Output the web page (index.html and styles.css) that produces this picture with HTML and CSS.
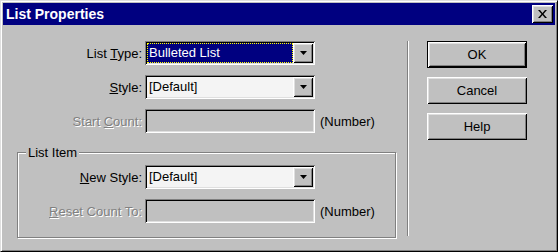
FILE: index.html
```html
<!DOCTYPE html>
<html lang="en">
<head>
    <meta charset="UTF-8">
    <title>List Properties</title>
    <link rel="stylesheet" href="styles.css">
</head>
<body>

<div class="window">
    <div class="titlebar">
        <span class="title">List Properties</span>
        <button class="close" type="button">
            <svg width="9" height="8" viewBox="0 0 9 8"><path d="M0 0h2l2.5 3 2.5-3h2l-3.5 4 3.5 4h-2l-2.5-3-2.5 3h-2l3.5-4z" fill="#000"/></svg>
        </button>
    </div>

    <div class="content">
        <div class="fields">
            <div class="row">
                <label>List <u>T</u>ype:</label>
                <div class="combo">
                    <div class="value selected">Bulleted List</div>
                    <div class="drop"><svg width="7" height="4" viewBox="0 0 7 4"><path d="M0 0h7l-3.5 4z" fill="#000"/></svg></div>
                </div>
            </div>
            <div class="row">
                <label><u>S</u>tyle:</label>
                <div class="combo">
                    <div class="value">[Default]</div>
                    <div class="drop"><svg width="7" height="4" viewBox="0 0 7 4"><path d="M0 0h7l-3.5 4z" fill="#000"/></svg></div>
                </div>
            </div>
            <div class="row">
                <label class="disabled">Start <u>C</u>ount:</label>
                <div class="field"></div>
                <span class="hint">(Number)</span>
            </div>

            <div class="group">
                <span class="legend">List Item</span>
                <div class="row">
                    <label><u>N</u>ew Style:</label>
                    <div class="combo">
                        <div class="value">[Default]</div>
                        <div class="drop"><svg width="7" height="4" viewBox="0 0 7 4"><path d="M0 0h7l-3.5 4z" fill="#000"/></svg></div>
                    </div>
                </div>
                <div class="row">
                    <label class="disabled"><u>R</u>eset Count To:</label>
                    <div class="field"></div>
                    <span class="hint">(Number)</span>
                </div>
            </div>
        </div>

        <div class="divider"></div>

        <div class="buttons">
            <button class="btn default" type="button">OK</button>
            <button class="btn" type="button">Cancel</button>
            <button class="btn" type="button">Help</button>
        </div>
    </div>
</div>

</body>
</html>
```

FILE: styles.css
```css
body {
    margin: 0;
    background-color: #c0c0c0;
    font-family: "Liberation Sans", Arial, sans-serif;
    font-size: 13px;
    color: #000;
}

.window {
    width: 558px;
    height: 252px;
    box-sizing: border-box;
    padding: 2px;
    border: 1px solid;
    border-color: #dfdfdf #000 #000 #dfdfdf;
    box-shadow: inset 1px 1px #fff, inset -1px -1px #808080;
    background-color: #c0c0c0;
    display: flex;
    flex-direction: column;
}

.titlebar {
    height: 22px;
    flex-shrink: 0;
    background-color: #000080;
    color: #fff;
    display: flex;
    align-items: center;
    justify-content: space-between;
    padding: 0 2px 0 3px;
}

.title {
    font-weight: bold;
    font-size: 14px;
}

.close,
.btn,
.drop {
    background-color: #c0c0c0;
    border: none;
    padding: 0;
    box-shadow: inset 1px 1px #fff, inset -1px -1px #000, inset 2px 2px #dfdfdf, inset -2px -2px #808080;
    display: flex;
    align-items: center;
    justify-content: center;
}

.close {
    width: 21px;
    height: 18px;
}

.content {
    display: flex;
    flex: 1;
}

.fields {
    width: 404px;
    padding-top: 16px;
    display: flex;
    flex-direction: column;
    gap: 10px;
}

.row {
    display: flex;
    align-items: center;
    height: 24px;
}

.row label {
    width: 139px;
    margin-right: 3px;
    text-align: right;
    white-space: nowrap;
}

.disabled {
    color: #808080;
    text-shadow: 1px 1px 0 #fff;
}

.combo,
.field {
    width: 170px;
    height: 24px;
    box-sizing: border-box;
    padding: 2px;
    box-shadow: inset 1px 1px #808080, inset -1px -1px #fff, inset 2px 2px #000, inset -2px -2px #dfdfdf;
}

.combo {
    background-color: #f4f4f4;
    display: flex;
}

.value {
    flex: 1;
    padding-left: 2px;
    line-height: 20px;
}

.value.selected {
    background-color: #000080;
    color: #fff;
    outline: 1px dotted #ffff00;
    outline-offset: -1px;
}

.drop {
    width: 20px;
    height: 20px;
}

.hint {
    margin-left: 5px;
}

.group {
    position: relative;
    margin: 9px 0 0 14px;
    width: 379px;
    height: 86px;
    box-sizing: border-box;
    padding-top: 12px;
    border: 1px solid #808080;
    box-shadow: inset 1px 1px #fff, 1px 1px #fff;
    display: flex;
    flex-direction: column;
    gap: 10px;
}

.group .row label {
    width: 124px;
}

.legend {
    position: absolute;
    top: -8px;
    left: 8px;
    padding: 0 2px;
    background-color: #c0c0c0;
}

.divider {
    width: 0;
    height: 195px;
    margin-top: 16px;
    border-left: 1px solid #808080;
    border-right: 1px solid #fff;
}

.buttons {
    margin-left: 18px;
    padding-top: 16px;
    display: flex;
    flex-direction: column;
    gap: 9px;
}

.btn {
    width: 100px;
    height: 27px;
    box-sizing: border-box;
    font-family: inherit;
    font-size: 13px;
    color: #000;
}

.btn.default {
    border: 1px solid #000;
}
```
